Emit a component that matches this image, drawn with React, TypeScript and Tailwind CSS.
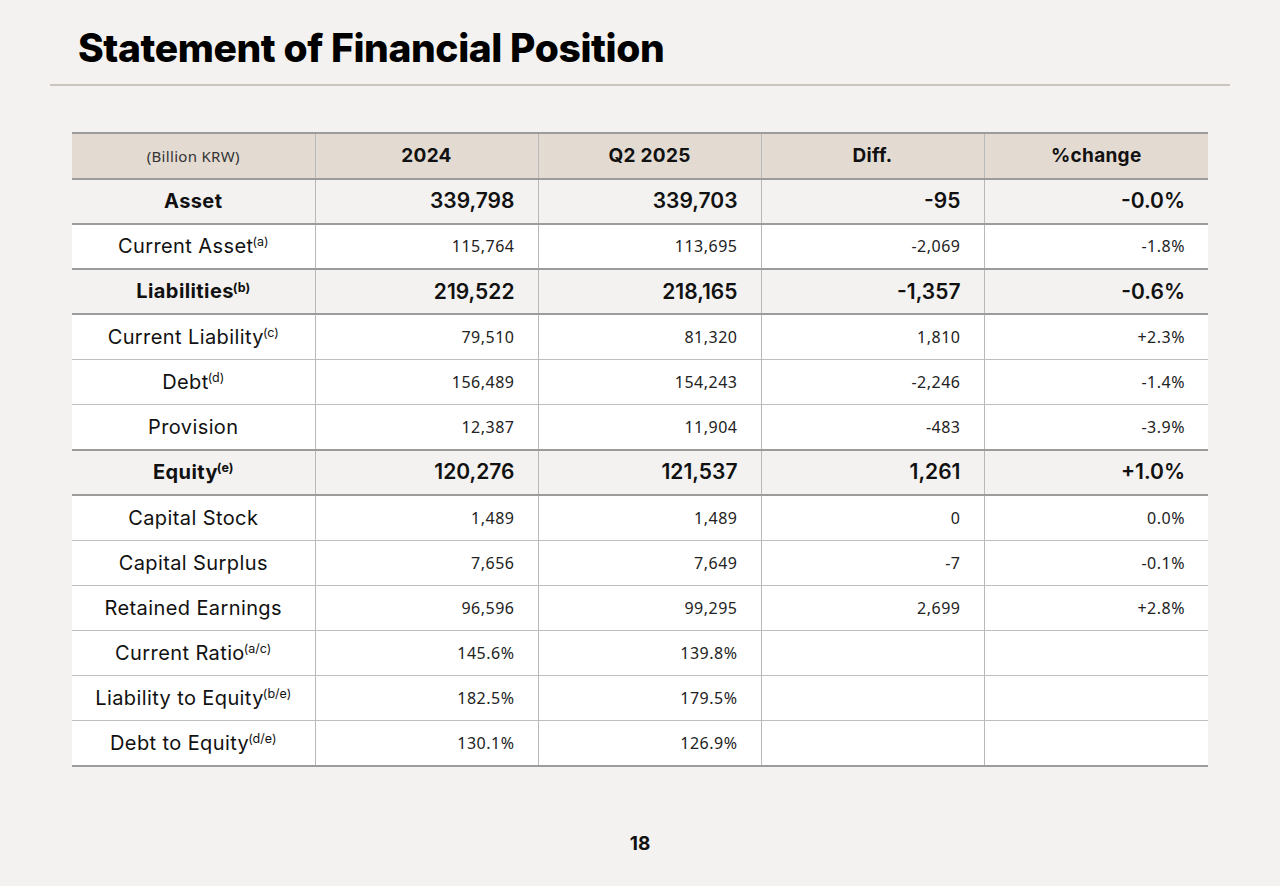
import React from 'react';

type Row = {
  label: string;
  sup?: string;
  bold?: boolean;
  values: string[];
};

const rows: Row[] = [
  { label: 'Asset', bold: true, values: ['339,798', '339,703', '-95', '-0.0%'] },
  { label: 'Current Asset', sup: '(a)', values: ['115,764', '113,695', '-2,069', '-1.8%'] },
  { label: 'Liabilities', sup: '(b)', bold: true, values: ['219,522', '218,165', '-1,357', '-0.6%'] },
  { label: 'Current Liability', sup: '(c)', values: ['79,510', '81,320', '1,810', '+2.3%'] },
  { label: 'Debt', sup: '(d)', values: ['156,489', '154,243', '-2,246', '-1.4%'] },
  { label: 'Provision', values: ['12,387', '11,904', '-483', '-3.9%'] },
  { label: 'Equity', sup: '(e)', bold: true, values: ['120,276', '121,537', '1,261', '+1.0%'] },
  { label: 'Capital Stock', values: ['1,489', '1,489', '0', '0.0%'] },
  { label: 'Capital Surplus', values: ['7,656', '7,649', '-7', '-0.1%'] },
  { label: 'Retained Earnings', values: ['96,596', '99,295', '2,699', '+2.8%'] },
  { label: 'Current Ratio', sup: '(a/c)', values: ['145.6%', '139.8%', '', ''] },
  { label: 'Liability to Equity', sup: '(b/e)', values: ['182.5%', '179.5%', '', ''] },
  { label: 'Debt to Equity', sup: '(d/e)', values: ['130.1%', '126.9%', '', ''] },
];

const headers = ['2024', 'Q2 2025', 'Diff.', '%change'];

const App = () => {
  return (
    <div className="min-h-screen w-full bg-[#f3f2f0] font-['Inter',sans-serif] text-[#111]">
      <div className="h-[886px] flex flex-col">
        <h1 className="pl-[78px] pt-[25px] h-[84px] text-[39px] leading-[46px] font-extrabold tracking-[-0.4px] text-black">
          Statement of Financial Position
        </h1>
        <div className="mx-[50px] h-[2px] bg-[#cbc4bd]" />

        <div className="px-[72px] pt-[46px]">
          <table className="w-full border-collapse table-fixed">
            <colgroup>
              <col className="w-[243px]" />
              <col className="w-[223px]" />
              <col className="w-[223px]" />
              <col className="w-[223px]" />
              <col />
            </colgroup>
            <thead>
              <tr className="h-[45.5px] bg-[#e3dbd2] border-t-2 border-b-2 border-[#9c9c9c]">
                <th className="text-[15px] font-normal tracking-[0.3px] text-[#333] font-['Noto_Sans',sans-serif]">
                  (Billion KRW)
                </th>
                {headers.map((h) => (
                  <th key={h} className="text-[19px] font-bold tracking-[0.3px] border-l border-[#b8b8b8]">
                    {h}
                  </th>
                ))}
              </tr>
            </thead>
            <tbody>
              {rows.map((r, i) => {
                const next = rows[i + 1];
                const thick = r.bold || !next || next.bold;
                return (
                  <tr
                    key={r.label}
                    className={`h-[45.2px] ${r.bold ? 'bg-[#f3f2f0]' : 'bg-white'} border-b ${
                      thick ? 'border-b-2 border-[#9c9c9c]' : 'border-[#bdbdbd]'
                    }`}
                  >
                    <td className={`text-center text-[20px] tracking-[0.4px] ${r.bold ? 'font-bold' : 'font-normal'}`}>
                      {r.label}
                      {r.sup && (
                        <sup className="text-[12.5px] ml-[-1px] top-[-0.55em] tracking-normal">{r.sup}</sup>
                      )}
                    </td>
                    {r.values.map((v, j) => (
                      <td
                        key={j}
                        className={`text-right pr-[23px] border-l border-[#b8b8b8] ${
                          r.bold
                            ? 'text-[21px] font-semibold'
                            : "text-[16px] font-normal font-['Noto_Sans',sans-serif] tracking-[0.5px] text-[#222]"
                        }`}
                      >
                        {v}
                      </td>
                    ))}
                  </tr>
                );
              })}
            </tbody>
          </table>
        </div>

        <div className="mt-auto pb-[28px] text-center text-[19px] font-bold">18</div>
      </div>
    </div>
  );
};

export default App;
